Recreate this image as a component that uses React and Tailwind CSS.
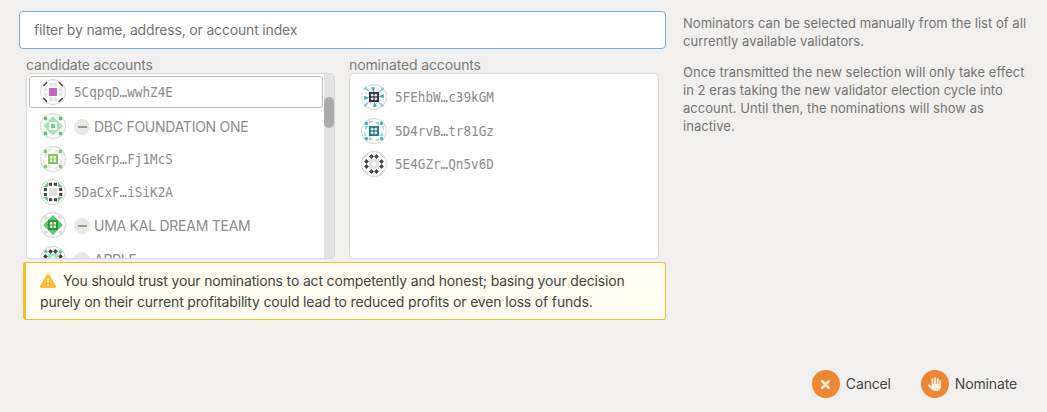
import React from "react";
import { FaHand, FaTriangleExclamation, FaXmark } from "react-icons/fa6";

const SIDES = [0, 90, 180, 270];

function Sides({ children }) {
  return SIDES.map((angle) => (
    <g key={angle} transform={`rotate(${angle} 13 13)`}>
      {children}
    </g>
  ));
}

function WindowBlock({ fill, hole = "#fff" }) {
  return (
    <g>
      <rect x="8" y="8" width="10" height="10" fill={fill} />
      <path fill={hole} d="M10 10h2.4v2.4H10zM13.6 10H16v2.4h-2.4zM10 13.6h2.4V16H10zM13.6 13.6H16V16h-2.4z" />
    </g>
  );
}

function DotBlock({ fill }) {
  return (
    <g>
      <rect x="8" y="8" width="10" height="10" fill={fill} />
      {[11.2, 14.8].map((y) => [11.2, 14.8].map((x) => <circle key={`${x}-${y}`} cx={x} cy={y} r="1.35" fill="#e9f3f5" />))}
    </g>
  );
}

const ICONS = {
  purple: (
    <g>
      <Sides>
        <circle cx="10.7" cy="5.5" r="1.9" fill="#e3e3e3" />
        <circle cx="15.3" cy="5.5" r="1.9" fill="#e3e3e3" />
        <path d="M3.3 7 7.2 3.2" stroke="#454545" strokeWidth="1.3" />
      </Sides>
      <rect x="9" y="9" width="8" height="8" fill="#bf64c9" />
    </g>
  ),
  mint: (
    <g>
      <Sides>
        <path d="M13 3.2 17.8 8H8.2z" fill="#a8e2b4" />
        <rect x="3.8" y="3.8" width="3.4" height="3.4" rx=".6" fill="#57c86d" />
      </Sides>
      <path d="M8 8h10v10H8z" fill="#a8e2b4" />
      <path d="M9 9h8v8H9z" fill="#fff" />
      <rect x="11" y="11" width="4" height="4" fill="#6fd083" />
    </g>
  ),
  lime: (
    <g>
      <Sides>
        <rect x="3.8" y="3.8" width="3.4" height="3.4" rx=".6" fill="#82cf5f" />
        <path d="M8 3.3h5L8 6zM18 3.3v4.5l-4.5-3z" fill="#e5e5e5" />
      </Sides>
      <WindowBlock fill="#7dcb5c" />
    </g>
  ),
  blocks: (
    <g>
      <Sides>
        <path d="M3.3 8 8 3.3V8z" fill="#5dcb7d" />
        <rect x="3.8" y="9" width="3" height="3.2" fill="#404040" />
        <rect x="3.8" y="14" width="3" height="3.2" fill="#404040" />
      </Sides>
      <rect x="7.6" y="7.6" width="10.8" height="10.8" fill="#fff" />
      <rect x="9" y="9" width="8" height="8" fill="#dedede" />
    </g>
  ),
  diamond: (
    <g>
      <Sides>
        <circle cx="5.7" cy="5.7" r="2" fill="#e0e0e0" />
      </Sides>
      <path d="M13 3.1 22.9 13 13 22.9 3.1 13z" fill="#5bc768" />
      <WindowBlock fill="#2c963b" />
    </g>
  ),
  forest: (
    <g>
      <Sides>
        <circle cx="5.9" cy="5.6" r="1.8" fill="#62cf91" />
        <path d="m10.5 3.1 2.4 2.4-2.4 2.4-2.4-2.4zM15.5 3.1l2.4 2.4-2.4 2.4-2.4-2.4z" fill="#3d4241" />
      </Sides>
      <rect x="8" y="8" width="10" height="10" fill="#a8e4c3" />
      <circle cx="13" cy="13" r="2.4" fill="#fff" />
    </g>
  ),
  rays: (
    <g>
      <Sides>
        <path d="M2.8 4.6 5 2.8 9.4 9z" fill="#81c8da" />
        <path d="M10 3.2h4L12.6 8.3z" fill="#3aa3bf" />
        <path d="M17.6 4.5 15 8.5h2z" fill="#a6d8e4" />
      </Sides>
      <DotBlock fill="#34383b" />
    </g>
  ),
  teal: (
    <g>
      <Sides>
        <circle cx="5.4" cy="5.4" r="1.8" fill="#4bb3c3" />
        <path d="M8 3.3h5L8 5.7zM18 3.3V8l-4-3.5z" fill="#9bd7df" />
      </Sides>
      <DotBlock fill="#2d7e8a" />
    </g>
  ),
  rose: (
    <g>
      <Sides>
        <path d="m10.5 3.1 2.4 2.4-2.4 2.4-2.4-2.4zM15.5 3.1l2.4 2.4-2.4 2.4-2.4-2.4z" fill="#454545" />
        <path d="M3.3 7 7 3.3" stroke="#e89aac" strokeWidth=".9" />
      </Sides>
      <rect x="8" y="8" width="10" height="10" fill="#e2e2e2" />
      <circle cx="13" cy="13" r="2.2" fill="#fff" />
    </g>
  ),
};

function Identicon({ name }) {
  return (
    <svg viewBox="0 0 26 26" className="size-[26px] shrink-0">
      <circle cx="13" cy="13" r="12.4" fill="#fff" stroke="#d9d9d9" strokeWidth="1.1" />
      {ICONS[name]}
    </svg>
  );
}

function Account({ icon, address, name, className = "" }) {
  return (
    <div className={`flex h-[33.25px] shrink-0 items-center pl-[13px] ${className}`}>
      <Identicon name={icon} />
      {address ? (
        <span className="ml-2 origin-left scale-x-[0.902] font-['DejaVu_Sans_Mono',monospace] text-[14px] leading-5 whitespace-nowrap text-[#8c8c8c]">
          {address}
        </span>
      ) : (
        <span className="ml-2 flex items-center pt-0.5 text-[14px] leading-5 tracking-[-0.26px] whitespace-nowrap text-[#8c8c8c]">
          <span className="mr-1 flex size-4 items-center justify-center rounded-full bg-[#e9e8e7]">
            <span className="h-[2px] w-[9px] bg-[#999]" />
          </span>
          {name}
        </span>
      )}
    </div>
  );
}

function ActionButton({ icon, label }) {
  return (
    <button className="flex items-center gap-[6px] text-[14px] leading-5 tracking-[-0.15px] text-[#444]">
      <span className="flex size-7 items-center justify-center rounded-full bg-[#ee8733] text-[#fdeedd]">{icon}</span>
      {label}
    </button>
  );
}

export default function App() {
  return (
    <div className="flex h-[412px] w-[1047px] flex-col overflow-hidden bg-[#f1f0ee] font-[Inter,sans-serif] text-[14px] text-[#444]">
      <div className="flex pt-[11px]">
        <div className="flex w-[666px] flex-col">
          <input
            className="ml-[19px] h-[38px] w-[647px] rounded-[4px] border border-[#78acd6] bg-white px-[14px] pb-[2px] text-[14px] tracking-[-0.17px] outline-none placeholder:text-[#747474]"
            placeholder="filter by name, address, or account index"
          />
          <div className="flex gap-[14px] pt-[6px] pl-[26px]">
            <div className="w-[309px]">
              <div className="h-[18px] leading-5 tracking-[-0.17px] text-[#7b7b7b]">candidate accounts</div>
              <div className="flex h-[186px] overflow-hidden rounded-[4px] border border-[#d8d8d7] bg-white">
                <div className="flex flex-1 flex-col overflow-hidden">
                  <div className="mr-px ml-[2px] mt-[2px] flex h-8 shrink-0 items-center rounded-[3px] border border-[#bbb]">
                    <Account icon="purple" address="5CqpqD…wwhZ4E" className="-ml-[3px]" />
                  </div>
                  <div className="flex flex-col pt-px">
                    <Account icon="mint" name="DBC FOUNDATION ONE" />
                    <Account icon="lime" address="5GeKrp…Fj1McS" />
                    <Account icon="blocks" address="5DaCxF…iSiK2A" />
                    <Account icon="diamond" name="UMA KAL DREAM TEAM" />
                    <Account icon="forest" name="APPLE" />
                  </div>
                </div>
                <div className="w-[10px] bg-[#e3e3e3] pt-[23px]">
                  <div className="h-[31px] rounded-full bg-[#ababab]" />
                </div>
              </div>
            </div>
            <div className="w-[310px]">
              <div className="h-[18px] leading-5 tracking-[-0.13px] text-[#7b7b7b]">nominated accounts</div>
              <div className="flex h-[186px] flex-col rounded-[4px] border border-[#d8d8d7] bg-white pt-[6.75px]">
                <Account icon="rays" address="5FEhbW…c39kGM" className="-ml-[2px]" />
                <Account icon="teal" address="5D4rvB…tr81Gz" className="-ml-[2px]" />
                <Account icon="rose" address="5E4GZr…Qn5v6D" className="-ml-[2px]" />
              </div>
            </div>
          </div>
          <div className="mt-[3px] ml-[23px] h-[58px] w-[643px] rounded-[3px] border border-l-[3px] border-[#fbbd2c] bg-[#fffdf1] pt-[7px] pl-[14px] leading-[21px] tracking-[-0.165px] whitespace-nowrap text-[#444]">
            <div className="flex items-center">
              <FaTriangleExclamation className="mr-[7px] size-4 text-[#fdbb2f]" />
              <span>You should trust your nominations to act competently and honest; basing your decision</span>
            </div>
            <div>purely on their current profitability could lead to reduced profits or even loss of funds.</div>
          </div>
        </div>
        <div className="flex flex-col gap-[13px] pt-[3px] pl-[17px] text-[13px] leading-[18px] tracking-[0.04px] whitespace-nowrap text-[#747474]">
          <p>
            Nominators can be selected manually from the list of all
            <br />
            currently available validators.
          </p>
          <p>
            Once transmitted the new selection will only take effect
            <br />
            in 2 eras taking the new validator election cycle into
            <br />
            account. Until then, the nominations will show as
            <br />
            inactive.
          </p>
        </div>
      </div>
      <div className="mt-auto flex justify-end gap-[30px] pr-[30px] pb-[14px]">
        <ActionButton icon={<FaXmark className="size-[13px]" strokeWidth="40" stroke="currentColor" />} label="Cancel" />
        <ActionButton icon={<FaHand className="size-[14px]" />} label="Nominate" />
      </div>
    </div>
  );
}
